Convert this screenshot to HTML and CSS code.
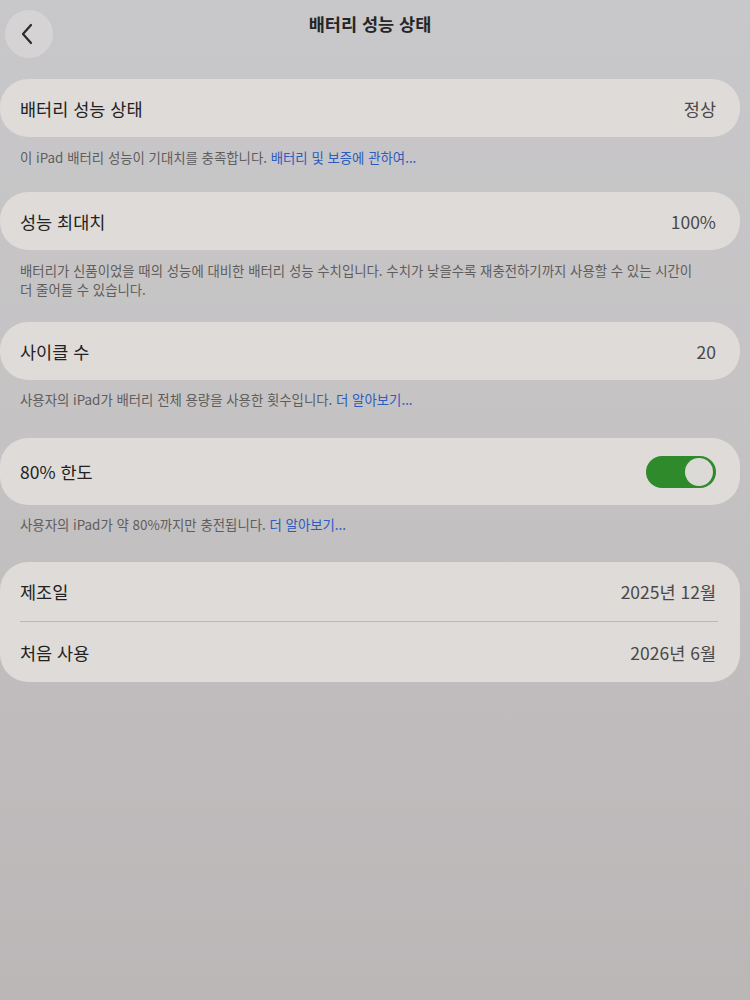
FILE: index.html
```html
<!DOCTYPE html>
<html lang="ko">
<head>
<meta charset="utf-8">
<title>배터리 성능 상태</title>
<link rel="stylesheet" href="styles.css">
</head>
<body>
<div class="screen">
  <header class="nav">
    <button class="back" aria-label="뒤로">
      <svg width="14" height="22" viewBox="0 0 14 22"><path d="M11 2 L3 11 L11 20" fill="none" stroke="#2a2a2a" stroke-width="2.2" stroke-linecap="round" stroke-linejoin="round"/></svg>
    </button>
    <h1 class="title">배터리 성능 상태</h1>
  </header>

  <section class="card">
    <div class="row"><span class="label">배터리 성능 상태</span><span class="value">정상</span></div>
  </section>
  <p class="foot foot-one">이 iPad 배터리 성능이 기대치를 충족합니다. <span class="link">배터리 및 보증에 관하여...</span></p>

  <section class="card">
    <div class="row"><span class="label">성능 최대치</span><span class="value">100%</span></div>
  </section>
  <p class="foot foot-two">배터리가 신품이었을 때의 성능에 대비한 배터리 성능 수치입니다. 수치가 낮을수록 재충전하기까지 사용할 수 있는 시간이 더 줄어들 수 있습니다.</p>

  <section class="card">
    <div class="row"><span class="label">사이클 수</span><span class="value">20</span></div>
  </section>
  <p class="foot foot-three">사용자의 iPad가 배터리 전체 용량을 사용한 횟수입니다. <span class="link">더 알아보기...</span></p>

  <section class="card">
    <div class="row tall"><span class="label">80% 한도</span><span class="toggle"><span class="knob"></span></span></div>
  </section>
  <p class="foot foot-four">사용자의 iPad가 약 80%까지만 충전됩니다. <span class="link">더 알아보기...</span></p>

  <section class="card">
    <div class="row first"><span class="label">제조일</span><span class="value">2025년 12월</span></div>
    <div class="divider"></div>
    <div class="row last"><span class="label">처음 사용</span><span class="value">2026년 6월</span></div>
  </section>
</div>
</body>
</html>
```

FILE: styles.css
```css
html, body {
  margin: 0;
  padding: 0;
}
body {
  width: 750px;
  height: 1000px;
  overflow: hidden;
  font-family: "Noto Sans CJK KR", "Noto Sans", sans-serif;
  background: linear-gradient(180deg, #c8c7c9 0%, #c5c3c4 40%, #bfbbbc 75%, #bbb7b7 100%);
}
.screen {
  padding-right: 10px;
}
.nav {
  height: 79px;
  display: flex;
  justify-content: center;
  position: relative;
}
.back {
  position: absolute;
  left: 5px;
  top: 10px;
  width: 48px;
  height: 48px;
  border-radius: 50%;
  border: none;
  background: #d5d3d3;
  display: flex;
  align-items: center;
  justify-content: center;
  padding: 0 4px 0 0;
}
.title {
  margin: 11px 0 0 0;
  font-size: 17.5px;
  font-weight: 700;
  color: #262626;
  line-height: 26px;
}
.card {
  background: #dedbd8;
  border-radius: 28px;
  padding: 0 24px 0 20px;
}
.row {
  height: 58px;
  display: flex;
  align-items: center;
  justify-content: space-between;
}
.row.tall {
  height: 67px;
}
.row.first {
  height: 59px;
}
.row.last {
  height: 60px;
}
.label {
  font-size: 17.5px;
  color: #222222;
}
.value {
  font-size: 17.5px;
  color: #4a4848;
}
.divider {
  height: 1px;
  background: #bab7b5;
  margin-right: -2px;
}
.foot {
  margin: 0;
  padding: 11px 40px 25px 20px;
  font-size: 13.4px;
  line-height: 19px;
  color: #5f5d5d;
}
.foot-two {
  padding-bottom: 23px;
}
.foot-three {
  padding-top: 10px;
  padding-bottom: 29px;
}
.foot-four {
  padding-top: 10px;
  padding-bottom: 28px;
}
.link {
  color: #2c5cc0;
}
.toggle {
  width: 70px;
  height: 32px;
  border-radius: 16px;
  background: #2f8a2c;
  display: flex;
  align-items: center;
  justify-content: flex-end;
  padding: 0 3px;
  box-sizing: border-box;
}
.knob {
  width: 28px;
  height: 28px;
  border-radius: 50%;
  background: #dcdad6;
}
```
